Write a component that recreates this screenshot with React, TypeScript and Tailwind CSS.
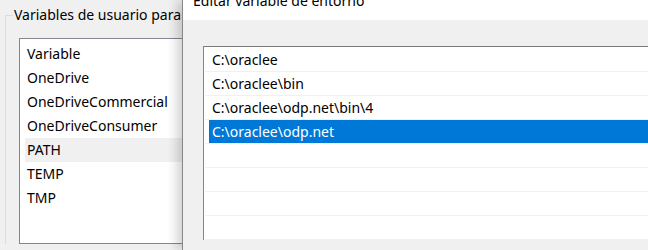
const userVars = [
  "Variable",
  "OneDrive",
  "OneDriveCommercial",
  "OneDriveConsumer",
  "PATH",
  "TEMP",
  "TMP",
];

const pathEntries = [
  "C:\\oraclee",
  "C:\\oraclee\\bin",
  "C:\\oraclee\\odp.net\\bin\\4",
  "C:\\oraclee\\odp.net",
  "",
  "",
  "",
  "",
];

function UserVariablesPanel() {
  return (
    <div className="w-[182px] shrink-0 overflow-hidden bg-[#f0f0f0]">
      <fieldset className="ml-[5px] mt-[5px] w-[400px] border-l border-t border-[#dcdcdc]">
        <legend className="ml-[7px] px-[1px] whitespace-nowrap text-[14px] leading-[20px] text-black">
          Variables de usuario para
        </legend>
        <div className="ml-[13px] mt-[13px] h-[206px] border border-[#828790] bg-white pt-[3px]">
          {userVars.map((name) => (
            <div
              key={name}
              className={`ml-[5px] h-[24px] pl-[2px] text-[14px] leading-[24px] text-black ${
                name === "PATH" ? "bg-[#f0f0f0]" : ""
              }`}
            >
              {name}
            </div>
          ))}
        </div>
      </fieldset>
    </div>
  );
}

function EditDialog() {
  return (
    <div className="relative z-10 flex-1 border-l border-[#888888] bg-[#f0f0f0] shadow-[-5px_0_10px_rgba(0,0,0,0.18)]">
      <div className="h-[20px] overflow-hidden bg-white pl-[10px]">
        <div className="-mt-[9px] whitespace-nowrap text-[14px] leading-[20px] text-black">
          Editar variable de entorno
        </div>
      </div>
      <div className="pl-[20px] pt-[26px]">
        <div className="w-[500px] border-l border-t border-l-[#828790] border-t-[#7a7a7a] bg-white pl-[1px] pt-[1px]">
          {pathEntries.map((entry, i) => (
            <div key={i} className="h-[24px] border-b border-[#f0f0f0]">
              <div
                className={`ml-[4px] h-[23px] pl-[3px] text-[14px] leading-[23px] whitespace-nowrap ${
                  i === 3 ? "bg-[#0078d7] text-white" : "text-black"
                }`}
              >
                {entry}
              </div>
            </div>
          ))}
        </div>
      </div>
    </div>
  );
}

export default function App() {
  return (
    <div className="flex h-[250px] w-[648px] overflow-hidden bg-[#f0f0f0] font-['Segoe_UI','Noto_Sans',sans-serif]">
      <UserVariablesPanel />
      <EditDialog />
    </div>
  );
}
